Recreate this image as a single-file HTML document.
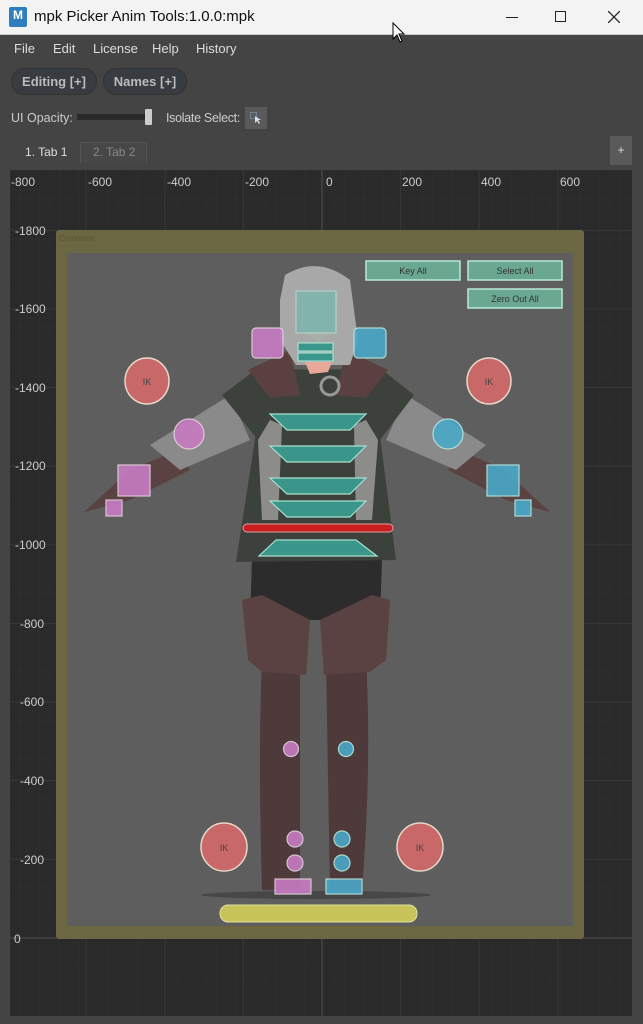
<!DOCTYPE html>
<html><head><meta charset="utf-8"><style>
*{margin:0;padding:0;box-sizing:border-box}
body{width:643px;height:1024px;background:#444;font-family:"Liberation Sans",sans-serif;position:relative;overflow:hidden;color:#ddd}
.t{position:absolute;white-space:nowrap}
#title{position:absolute;left:0;top:0;width:643px;height:35px;background:#f3f3f3;border-bottom:1px solid #ccc}
.menu{font-size:13px;color:#ddd;top:41px}
.pill{position:absolute;top:68px;height:27px;border-radius:13px;background:#383b3f;border:1px solid #333;color:#bbb;font-weight:bold;font-size:13px;text-align:center;line-height:26px}
</style></head><body>
<div id="title">
 <div style="position:absolute;left:9px;top:7px;width:18px;height:20px;background:#2f7fc0;border-radius:2px;color:#fff;font-size:12px;font-weight:bold;text-align:center;line-height:16px">M</div>
 <div class="t" style="left:34px;top:8px;font-size:15px;color:#111">mpk Picker Anim Tools:1.0.0:mpk</div>
 <div style="position:absolute;left:506px;top:17px;width:12px;height:1px;background:#222"></div>
 <div style="position:absolute;left:555px;top:11px;width:11px;height:11px;border:1.3px solid #222"></div>
 <svg style="position:absolute;left:608px;top:11px" width="12" height="12"><path d="M0 0L12 12M12 0L0 12" stroke="#222" stroke-width="1.3"/></svg>
 <svg style="position:absolute;left:392px;top:22px" width="14" height="22"><path d="M1 1L1 17L5 13L8 20L10 19L7 12L12 12Z" fill="#fff" stroke="#000"/></svg>
</div>
<div class="t menu" style="left:14px">File</div>
<div class="t menu" style="left:53px">Edit</div>
<div class="t menu" style="left:93px">License</div>
<div class="t menu" style="left:152px">Help</div>
<div class="t menu" style="left:196px">History</div>
<div class="pill" style="left:11px;width:86px">Editing [+]</div>
<div class="pill" style="left:103px;width:84px">Names [+]</div>
<div class="t" style="left:11px;top:111px;font-size:12.5px;color:#ccc">UI Opacity:</div>
<div style="position:absolute;left:77px;top:114px;width:72px;height:6px;background:#2a2a2a"></div>
<div style="position:absolute;left:145px;top:109px;width:7px;height:16px;background:#ccc;border-radius:1px"></div>
<div class="t" style="left:166px;top:111px;font-size:12.5px;color:#ccc;letter-spacing:-0.3px">Isolate Select:</div>
<div style="position:absolute;left:245px;top:107px;width:22px;height:22px;background:#5a5a5a"></div>
<svg style="position:absolute;left:250px;top:112px" width="12" height="12"><rect x="0.5" y="0.5" width="6" height="6" fill="none" stroke="#8ac" stroke-dasharray="1 1"/><path d="M5 4L5 11L7 9L9 12L10 11L8 8L11 8Z" fill="#ddd"/></svg>
<div class="t" style="left:25px;top:145px;font-size:12px;color:#ddd">1. Tab 1</div>
<div style="position:absolute;left:80px;top:142px;width:67px;height:21px;border:1px solid #555;border-bottom:none;background:#474747"></div>
<div class="t" style="left:93px;top:145px;font-size:12px;color:#888">2. Tab 2</div>
<div style="position:absolute;left:610px;top:136px;width:22px;height:29px;background:#5a5a5a;color:#ddd;font-size:12px;text-align:center;line-height:29px">+</div>
<svg style="position:absolute;left:0;top:0" width="643" height="1024">
<defs>
<pattern id="g" x="10" y="170" width="9.825" height="9.825" patternUnits="userSpaceOnUse"><path d="M0 0H9.825M0 0V9.825" stroke="#303030" stroke-width="1"/></pattern>
</defs>
<rect x="10" y="170" width="622" height="846" fill="#2a2a2a"/>
<rect x="10" y="170" width="622" height="846" fill="url(#g)"/>
<g stroke="#373737" stroke-width="1">
<path d="M86.2 170V1016M164.8 170V1016M243.4 170V1016M400.6 170V1016M479.2 170V1016M557.8 170V1016"/>
<path d="M10 230.6H632M10 309.2H632M10 387.8H632M10 466.4H632M10 545H632M10 623.6H632M10 702.2H632M10 780.8H632M10 859.4H632"/>
</g>
<path d="M322 170V1016M10 938H632" stroke="#505050"/>
<g font-family="Liberation Sans" font-size="12" fill="#ccc">
<text x="11" y="186">-800</text><text x="88" y="186">-600</text><text x="167" y="186">-400</text><text x="245" y="186">-200</text><text x="326" y="186">0</text><text x="402" y="186">200</text><text x="481" y="186">400</text><text x="560" y="186">600</text>
<text x="15" y="235">-1800</text><text x="15" y="313">-1600</text><text x="15" y="392">-1400</text><text x="15" y="470">-1200</text><text x="15" y="549">-1000</text><text x="20" y="628">-800</text><text x="20" y="706">-600</text><text x="20" y="785">-400</text><text x="20" y="864">-200</text><text x="14" y="943">0</text>
</g>
<rect x="56" y="230" width="528" height="709" rx="3" fill="#6b6742"/>
<text x="59" y="241" font-family="Liberation Sans" font-size="8" fill="#5a5630">Comment</text>
<rect x="67" y="253" width="506" height="673" fill="#5e5e5e"/>
<!-- character -->
<ellipse cx="316" cy="895" rx="115" ry="4" fill="#474747"/>
<path d="M262 890Q258 750 262 660L300 660Q300 780 300 890Z" fill="#4e3a3a"/>
<path d="M330 890Q328 780 326 660L366 660Q372 760 362 890Z" fill="#4e3a3a"/>
<path d="M252 560L382 560L380 620L250 620Z" fill="#2c2c2c"/>
<path d="M242 600L262 595L310 620L306 675L262 672L248 660Z" fill="#5a4242"/>
<path d="M390 600L372 595L320 620L324 675L370 672L386 660Z" fill="#5a4242"/>
<path d="M84 512L130 470L178 450L190 470L130 500Z" fill="#5a4242"/>
<path d="M550 512L504 470L460 450L448 470L506 500Z" fill="#5a4242"/>
<path d="M150 445L230 395L250 440L180 470Z" fill="#8a8a8a"/>
<path d="M486 445L406 395L386 440L456 470Z" fill="#8a8a8a"/>
<path d="M258 420L378 420L396 560L236 562Z" fill="#3d413b"/>
<path d="M222 395L258 368L318 370L380 368L414 395L380 440L318 440L258 440Z" fill="#3d413b"/>
<path d="M248 370L290 350L300 395L270 398Z M388 370L346 350L336 395L366 398Z" fill="#5a4040"/>
<path d="M285 275Q318 255 350 280L358 340L350 365L296 365L280 340L280 300Z" fill="#a8a8a8"/>
<path d="M258 440L270 420L282 425L278 520L262 520Z M378 440L366 420L354 425L356 520L372 520Z" fill="#a0a0a0" opacity="0.8"/>
<path d="M298 292L338 292L336 330L318 342L300 330Z" fill="#a9b0a8"/>
<path d="M305 362L332 362L328 372L310 374Z" fill="#e8a898"/>
<circle cx="330" cy="386" r="9" fill="none" stroke="#999" stroke-width="3"/>
<!-- controls -->
<g stroke="#b8e8d8" stroke-width="1.5">
<rect x="366" y="261" width="94" height="19" fill="#6aa892"/>
<rect x="468" y="261" width="94" height="19" fill="#6aa892"/>
<rect x="468" y="289" width="94" height="19" fill="#6aa892"/>
<rect x="296" y="291" width="40" height="42" fill="#5fb8b0" opacity="0.5"/>
</g>
<g font-family="Liberation Sans" font-size="9" fill="#333" text-anchor="middle">
<text x="413" y="274">Key All</text><text x="515" y="274">Select All</text><text x="515" y="302">Zero Out All</text>
</g>
<g stroke="#e8d0e0" stroke-width="1.2" fill="#c77bc2" opacity="0.9">
<rect x="252" y="328" width="31" height="30" rx="4"/>
<circle cx="189" cy="434" r="15"/>
<rect x="118" y="465" width="32" height="31"/>
<rect x="106" y="500" width="16" height="16"/>
<circle cx="291" cy="749" r="7.5"/>
<circle cx="295" cy="839" r="8"/><circle cx="295" cy="863" r="8"/>
<rect x="275" y="879" width="36" height="15"/>
</g>
<g stroke="#b8e8e0" stroke-width="1.2" fill="#4aa8c8" opacity="0.9">
<rect x="354" y="328" width="32" height="30" rx="4"/>
<circle cx="448" cy="434" r="15"/>
<rect x="487" y="465" width="32" height="31"/>
<rect x="515" y="500" width="16" height="16"/>
<circle cx="346" cy="749" r="7.5"/>
<circle cx="342" cy="839" r="8"/><circle cx="342" cy="863" r="8"/>
<rect x="326" y="879" width="36" height="15"/>
</g>
<g stroke="#e8d8c8" stroke-width="1.5" fill="#c86868">
<ellipse cx="147" cy="381" rx="22" ry="23"/><ellipse cx="489" cy="381" rx="22" ry="23"/>
<ellipse cx="224" cy="847" rx="23" ry="24"/><ellipse cx="420" cy="847" rx="23" ry="24"/>
</g>
<g font-family="Liberation Sans" font-size="9" fill="#444" text-anchor="middle">
<text x="147" y="385">IK</text><text x="489" y="385">IK</text><text x="224" y="851">IK</text><text x="420" y="851">IK</text>
</g>
<g stroke="#a8e0d0" stroke-width="1.2" fill="#3a958a">
<rect x="298" y="343" width="35" height="8"/><rect x="298" y="353" width="35" height="8"/>
<path d="M270 414H366L350 430H287Z"/><path d="M270 446H366L350 462H287Z"/><path d="M270 478H366L350 494H287Z"/><path d="M270 501H366L350 517H287Z"/>
<path d="M276 540H356L377 556H259Z"/>
</g>
<rect x="243" y="524" width="150" height="8" rx="4" fill="#c82020" stroke="#e0a0a0"/>
<rect x="220" y="905" width="197" height="17" rx="8" fill="#c8c45a" stroke="#e0e0a0"/>
</svg>
</body></html>
